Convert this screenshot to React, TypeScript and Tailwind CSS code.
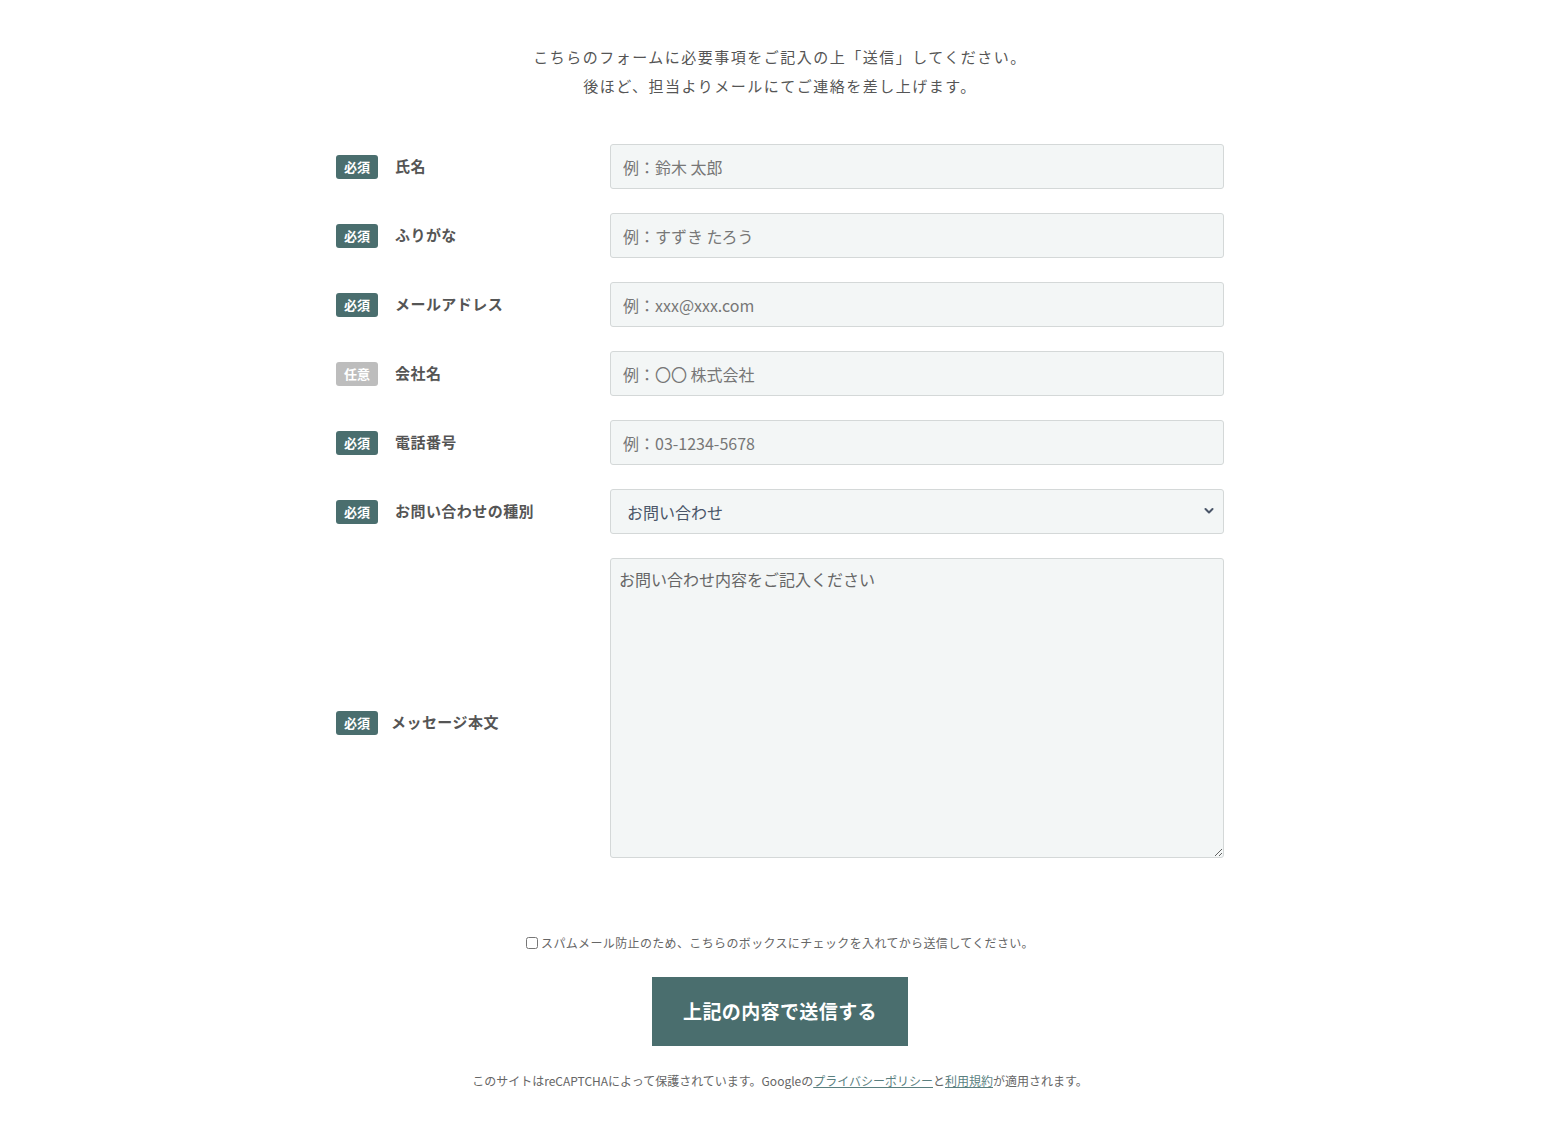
import React from "react";

const F = { fontFamily: '"Noto Sans CJK JP", "Noto Sans", sans-serif' };

function Badge({ required }: { required: boolean }) {
  return (
    <span
      className={`inline-flex h-[24px] w-[42px] shrink-0 items-center justify-center rounded-[3px] text-[13px] font-bold leading-none text-white ${
        required ? "bg-[#4a6e6e]" : "bg-[#bdbdbd]"
      }`}
    >
      {required ? "必須" : "任意"}
    </span>
  );
}

function Label({
  required,
  text,
  gap = "gap-[17px]",
  extra = "",
}: {
  required: boolean;
  text: string;
  gap?: string;
  extra?: string;
}) {
  return (
    <div className={`flex w-[274px] shrink-0 items-center ${gap} ${extra}`}>
      <Badge required={required} />
      <span className="text-[15px] font-bold tracking-[0.03em] text-[#555555]">{text}</span>
    </div>
  );
}

const inputCls =
  "h-[45px] w-[614px] rounded-[3px] border border-[#d4d8d8] bg-[#f3f6f6] px-[12px] text-[16px] text-[#555] outline-none placeholder:text-[#777777]";

export default function App() {
  return (
    <div className="min-h-[1128px] w-full bg-white pl-[15px]" style={F}>
      <div className="mx-auto flex w-[888px] flex-col items-center pt-[42px]">
        <div className="text-center text-[15px] leading-[29px] tracking-[0.1em] text-[#555555]">
          <p>こちらのフォームに必要事項をご記入の上「送信」してください。</p>
          <p>後ほど、担当よりメールにてご連絡を差し上げます。</p>
        </div>

        <form className="mt-[44px] flex w-full flex-col gap-[24px]">
          <div className="flex items-center">
            <Label required text="氏名" />
            <input className={inputCls} placeholder="例：鈴木 太郎" />
          </div>
          <div className="flex items-center">
            <Label required text="ふりがな" />
            <input className={inputCls} placeholder="例：すずき たろう" />
          </div>
          <div className="flex items-center">
            <Label required text="メールアドレス" />
            <input className={inputCls} placeholder="例：xxx@xxx.com" />
          </div>
          <div className="flex items-center">
            <Label required={false} text="会社名" />
            <input className={inputCls} placeholder="例：〇〇 株式会社" />
          </div>
          <div className="flex items-center">
            <Label required text="電話番号" />
            <input className={inputCls} placeholder="例：03-1234-5678" />
          </div>
          <div className="flex items-center">
            <Label required text="お問い合わせの種別" />
            <div className="relative">
              <select
                className="h-[45px] w-[614px] appearance-none rounded-[3px] border border-[#d4d8d8] bg-[#f3f6f6] px-[16px] text-[16px] text-[#4a5568] outline-none"
                defaultValue="お問い合わせ"
              >
                <option>お問い合わせ</option>
              </select>
              <svg
                className="pointer-events-none absolute right-[10px] top-[18px]"
                width="10"
                height="8"
                viewBox="0 0 10 8"
                fill="none"
              >
                <path d="M1.5 2 L5 5.5 L8.5 2" stroke="#4a5568" strokeWidth="2" strokeLinecap="round" strokeLinejoin="round" />
              </svg>
            </div>
          </div>
          <div className="flex items-center">
            <Label required text="メッセージ本文" gap="gap-[13px]" extra="mt-[29px]" />
            <textarea
              className="h-[300px] w-[614px] resize-y rounded-[3px] border border-[#d4d8d8] bg-[#f3f6f6] px-[8px] py-[8px] text-[16px] text-[#555] outline-none placeholder:text-[#666666]"
              placeholder="お問い合わせ内容をご記入ください"
            />
          </div>
        </form>

        <label className="mt-[76px] flex items-center gap-[3px] text-[12px] leading-[18px] tracking-[0.03em] text-[#666666]">
          <input type="checkbox" className="h-[12px] w-[12px]" />
          <span>スパムメール防止のため、こちらのボックスにチェックを入れてから送信してください。</span>
        </label>

        <button
          type="button"
          className="mt-[25px] h-[69px] w-[256px] bg-[#4a6e6e] text-[19px] font-bold tracking-[0.02em] text-white"
        >
          上記の内容で送信する
        </button>

        <p className="mt-[26px] text-[12px] leading-[18px] tracking-normal text-[#666666]">
          このサイトはreCAPTCHAによって保護されています。Googleの
          <a className="text-[#5a7f7f] underline" href="#">プライバシーポリシー</a>と
          <a className="text-[#5a7f7f] underline" href="#">利用規約</a>が適用されます。
        </p>
      </div>
    </div>
  );
}
